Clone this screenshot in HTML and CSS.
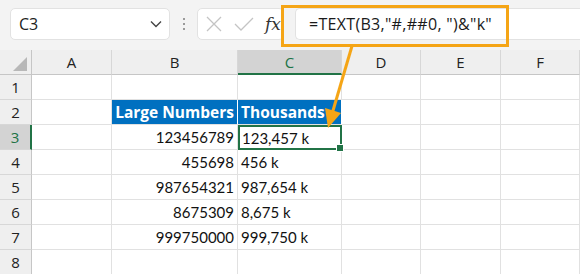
FILE: index.html
```html
<!DOCTYPE html>
<html lang="en">
<head>
    <meta charset="UTF-8">
    <meta name="viewport" content="width=device-width, initial-scale=1.0">
    <title>TEXT thousands</title>
    <link rel="stylesheet" href="styles.css">
</head>
<body>
    <div class="formula-bar">
        <div class="name-box">
            <span>C3</span>
            <svg class="chevron" width="12" height="8" viewBox="0 0 12 8"><path d="M1 1.5 L6 6.5 L11 1.5" fill="none" stroke="#444" stroke-width="1.4"/></svg>
        </div>
        <div class="dots"><i></i><i></i><i></i></div>
        <div class="fx-box">
            <svg width="16" height="16" viewBox="0 0 16 16"><path d="M1 1 L15 15 M15 1 L1 15" stroke="#c4c4c4" stroke-width="1.3"/></svg>
            <svg width="20" height="16" viewBox="0 0 20 16"><path d="M1 8 L7 14 L19 2" fill="none" stroke="#c4c4c4" stroke-width="1.3"/></svg>
            <span class="fx">fx</span>
        </div>
        <div class="formula-input">=TEXT(B3,"#,##0, ")&amp;"k"</div>
    </div>

    <div class="sheet">
        <div class="hd corner"><span class="tri"></span></div>
        <div class="hd">A</div>
        <div class="hd">B</div>
        <div class="hd sel-col">C</div>
        <div class="hd">D</div>
        <div class="hd">E</div>
        <div class="hd">F</div>

        <div class="rh">1</div><div class="c"></div><div class="c"></div><div class="c"></div><div class="c"></div><div class="c"></div><div class="c"></div>

        <div class="rh">2</div><div class="c"></div>
        <div class="c head">Large Numbers</div>
        <div class="c head left">Thousands</div>
        <div class="c"></div><div class="c"></div><div class="c"></div>

        <div class="rh sel-row">3</div><div class="c"></div>
        <div class="c num">123456789</div>
        <div class="c val active">123,457 k<span class="handle"></span></div>
        <div class="c"></div><div class="c"></div><div class="c"></div>

        <div class="rh">4</div><div class="c"></div>
        <div class="c num">455698</div>
        <div class="c val">456 k</div>
        <div class="c"></div><div class="c"></div><div class="c"></div>

        <div class="rh">5</div><div class="c"></div>
        <div class="c num">987654321</div>
        <div class="c val">987,654 k</div>
        <div class="c"></div><div class="c"></div><div class="c"></div>

        <div class="rh">6</div><div class="c"></div>
        <div class="c num">8675309</div>
        <div class="c val">8,675 k</div>
        <div class="c"></div><div class="c"></div><div class="c"></div>

        <div class="rh">7</div><div class="c"></div>
        <div class="c num">999750000</div>
        <div class="c val">999,750 k</div>
        <div class="c"></div><div class="c"></div><div class="c"></div>

        <div class="rh">8</div><div class="c"></div><div class="c"></div><div class="c"></div><div class="c"></div><div class="c"></div><div class="c"></div>
    </div>

    <div class="callout"></div>
    <svg class="arrow" width="580" height="274" viewBox="0 0 580 274">
        <line x1="352" y1="46" x2="332" y2="114" stroke="#f5a516" stroke-width="3"/>
        <polygon points="328,128 341,113 325,108" fill="#f5a516"/>
    </svg>
</body>
</html>
```

FILE: styles.css
```css
body, html {
    margin: 0;
    padding: 0;
    width: 580px;
    height: 274px;
    overflow: hidden;
    background: #f3f3f3;
    font-family: "Lato", "Open Sans", sans-serif;
}
.formula-bar {
    height: 50px;
    display: flex;
    align-items: center;
    padding-left: 10px;
    box-sizing: border-box;
    padding-bottom: 3px;
}
.name-box {
    width: 160px;
    height: 32px;
    box-sizing: border-box;
    background: #fff;
    border: 1px solid #e2e2e2;
    border-radius: 5px;
    display: flex;
    align-items: center;
    justify-content: space-between;
    padding: 0 7px 0 8px;
    font-family: "Open Sans", sans-serif;
    font-size: 16px;
    color: #222;
}
.dots {
    width: 27px;
    display: flex;
    flex-direction: column;
    align-items: center;
    gap: 3px;
}
.dots i {
    width: 2px;
    height: 2px;
    background: #9a9a9a;
}
.fx-box {
    width: 87px;
    height: 32px;
    box-sizing: border-box;
    background: #fff;
    border: 1px solid #e2e2e2;
    border-radius: 5px;
    display: flex;
    align-items: center;
    gap: 12px;
    padding-left: 8px;
    overflow: hidden;
}
.fx {
    font-family: "DejaVu Serif", "Liberation Serif", serif;
    font-style: italic;
    font-size: 17px;
    color: #333;
    margin-left: -1px;
}
.formula-input {
    flex: 1;
    height: 32px;
    box-sizing: border-box;
    margin-left: 11px;
    background: #fff;
    border: 1px solid #e2e2e2;
    border-right: none;
    border-radius: 5px 0 0 5px;
    display: flex;
    align-items: center;
    padding-left: 13px;
    font-family: "Open Sans", sans-serif;
    font-size: 16px;
    letter-spacing: 0.3px;
    color: #1a1a1a;
}
.sheet {
    display: grid;
    grid-template-columns: 32px 80px 126px 104px 79px 80px 79px;
    grid-auto-rows: 25px;
    background: #fff;
    font-size: 15px;
}
.sheet > div {
    box-sizing: border-box;
    display: flex;
    align-items: center;
}
.hd {
    background: #efefef;
    border-right: 1px solid #d7d7d7;
    border-bottom: 1px solid #c6c6c6;
    justify-content: center;
    font-family: "Open Sans", sans-serif;
    font-size: 15px;
    color: #222;
}
.corner {
    position: relative;
    border-right-color: #c6c6c6;
}
.tri {
    position: absolute;
    right: 4px;
    bottom: 3px;
    width: 0;
    height: 0;
    border-left: 14px solid transparent;
    border-bottom: 14px solid #b8b8b8;
}
.sel-col {
    background: #d3d3d3;
    border-bottom: 2px solid #217346;
    color: #217346;
}
.rh {
    background: #efefef;
    border-right: 1px solid #c6c6c6;
    border-bottom: 1px solid #d7d7d7;
    justify-content: center;
    font-family: "Open Sans", sans-serif;
    font-size: 15px;
    color: #222;
}
.sel-row {
    background: #d3d3d3;
    border-right: 2px solid #217346;
    color: #217346;
}
.c {
    border-right: 1px solid #e1e1e1;
    border-bottom: 1px solid #e1e1e1;
    padding: 0 3px;
    color: #111;
}
.head {
    background: #0070c0;
    color: #fff;
    font-family: "Open Sans", sans-serif;
    font-weight: bold;
    font-size: 15.5px;
    justify-content: flex-end;
    border-right-color: #fff;
    white-space: nowrap;
    overflow: hidden;
}
.head.left {
    justify-content: flex-start;
}
.num {
    justify-content: flex-end;
}
.active {
    position: relative;
    border: 2px solid #217346;
    padding-left: 2px;
}
.handle {
    position: absolute;
    right: -4px;
    bottom: -4px;
    width: 6px;
    height: 6px;
    background: #217346;
    border: 1px solid #fff;
}
.callout {
    position: absolute;
    left: 281px;
    top: 5px;
    width: 228px;
    height: 42px;
    box-sizing: border-box;
    border: 3px solid #f5a516;
}
.arrow {
    position: absolute;
    left: 0;
    top: 0;
    pointer-events: none;
}
```
